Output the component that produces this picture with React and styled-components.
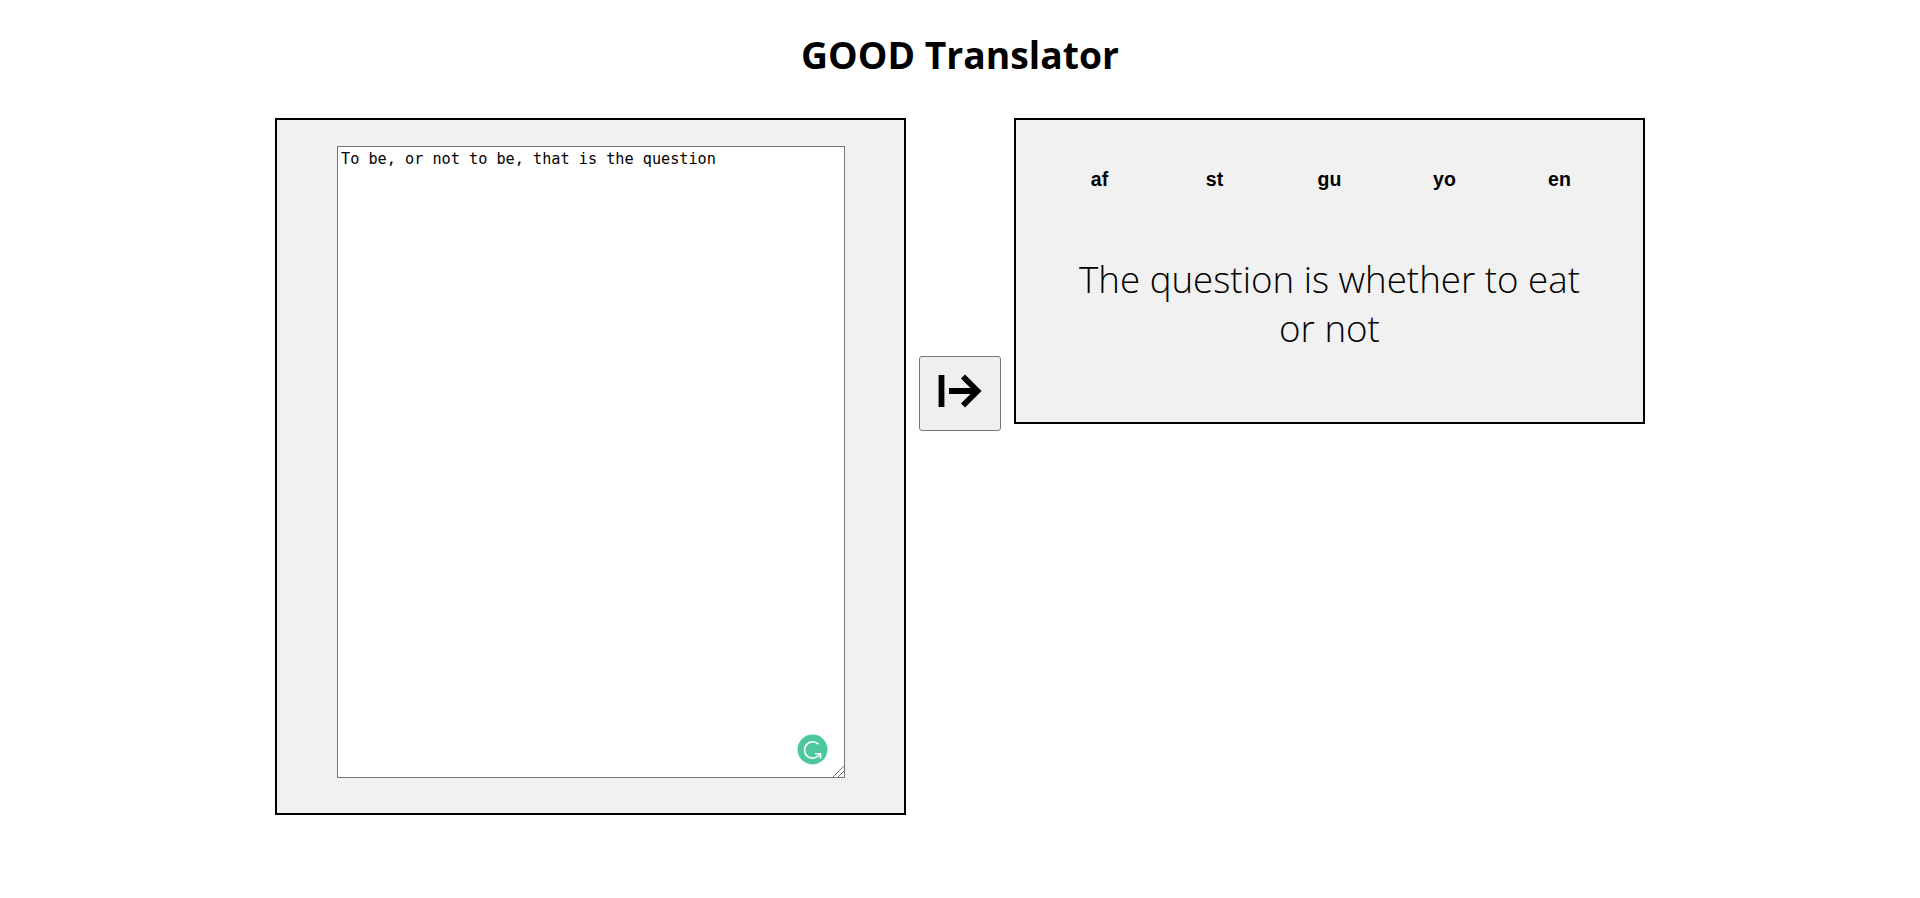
import React from "react"
import styled, { createGlobalStyle } from "styled-components"

const GlobalStyle = createGlobalStyle`
  body {
    margin: 0;
    background: #fff;
    color: #000;
    font-family: "Open Sans", sans-serif;
  }
`

const Page = styled.div`
  display: flex;
  flex-direction: column;
  align-items: center;
`

const Title = styled.h1`
  margin: 0;
  padding-top: 30px;
  height: 118px;
  box-sizing: border-box;
  font-size: 37.3px;
  line-height: 50px;
  font-weight: 700;
`

const Workspace = styled.div`
  display: flex;
  align-items: flex-start;
  gap: 13px;
`

const Panel = styled.div`
  width: 631px;
  box-sizing: border-box;
  border: 2px solid #000;
  background: #f1f1f1;
`

const SourcePanel = styled(Panel)`
  padding: 26px 60px 35px;
`

const SourceField = styled.textarea`
  display: block;
  width: 508px;
  height: 632px;
  margin: 0;
  padding: 3px;
  box-sizing: border-box;
  border: 1px solid #767676;
  background: #fff;
  color: #000;
  font-family: "DejaVu Sans Mono", monospace;
  font-size: 15.2px;
  line-height: 18px;
  outline: none;

  &::-webkit-resizer {
    background:
      linear-gradient(135deg, transparent 62%, #777 62% 66%, transparent 66% 78%, #777 78% 82%, transparent 82%);
  }
`

const FieldWrap = styled.div`
  position: relative;
`

const GrammarBadge = styled.svg`
  position: absolute;
  right: 16px;
  bottom: 13px;
  width: 31px;
  height: 31px;
`

const ArrowButton = styled.button`
  display: flex;
  align-items: center;
  justify-content: center;
  width: 82px;
  height: 75px;
  margin-top: 238px;
  padding: 0 0 6px;
  border: 1px solid #767676;
  border-radius: 3px;
  background: #efefef;
`

const TargetPanel = styled(Panel)`
  height: 306px;
`

const LangRow = styled.div`
  display: flex;
  justify-content: center;
  padding-top: 39px;
`

const LangButton = styled.button`
  width: 115px;
  height: 40px;
  padding: 0;
  border: none;
  background: transparent;
  color: #000;
  font-family: "Liberation Sans", Arial, sans-serif;
  font-size: 19.5px;
  font-weight: 700;
`

const Result = styled.p`
  margin: 56px 0 0;
  padding: 0 50px;
  text-align: center;
  font-size: 36.7px;
  line-height: 49px;
  font-weight: 300;
`

const langs = ["af", "st", "gu", "yo", "en"]

export default function App() {
  return (
    <Page>
      <GlobalStyle />
      <Title>GOOD Translator</Title>
      <Workspace>
        <SourcePanel>
          <FieldWrap>
            <SourceField defaultValue="To be, or not to be, that is the question" spellCheck={false} />
            <GrammarBadge viewBox="0 0 31 31">
              <circle cx="15.5" cy="15.5" r="15" fill="#4cc79f" />
              <path
                d="M21.5 10.2A8.2 8.2 0 1 0 22.6 20.4"
                fill="none"
                stroke="#fff"
                strokeWidth="1.6"
              />
              <path d="M18 19.8H23.5V24.5" fill="none" stroke="#fff" strokeWidth="1.6" />
            </GrammarBadge>
          </FieldWrap>
        </SourcePanel>
        <ArrowButton>
          <svg width="46" height="36" viewBox="0 0 46 36">
            <path
              d="M4.5 2V34M12 18H40M26 3.5L40.5 18L26 32.5"
              fill="none"
              stroke="#000"
              strokeWidth="5.8"
            />
          </svg>
        </ArrowButton>
        <TargetPanel>
          <LangRow>
            {langs.map(lang => (
              <LangButton key={lang}>{lang}</LangButton>
            ))}
          </LangRow>
          <Result>The question is whether to eat or not</Result>
        </TargetPanel>
      </Workspace>
    </Page>
  )
}
